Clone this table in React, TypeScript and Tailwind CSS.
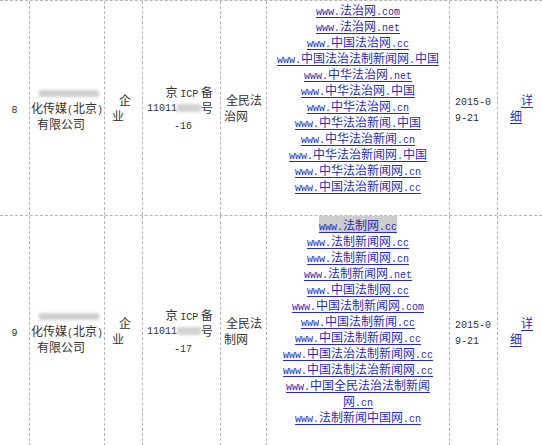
import React from 'react';

interface RecordRow {
  num: string;
  siteLine2: string;
  icpSuffix: string;
  links: string[][];
  highlightFirst?: boolean;
}

const rows: RecordRow[] = [
  {
    num: '8',
    siteLine2: '治网',
    icpSuffix: '-16',
    links: [
      ['www.法治网.com'],
      ['www.法治网.net'],
      ['www.中国法治网.cc'],
      ['www.中国法治法制新闻网.中国'],
      ['www.中华法治网.net'],
      ['www.中华法治网.中国'],
      ['www.中华法治网.cn'],
      ['www.中华法治新闻.中国'],
      ['www.中华法治新闻.cn'],
      ['www.中华法治新闻网.中国'],
      ['www.中华法治新闻网.cn'],
      ['www.中国法治新闻网.cc']
    ]
  },
  {
    num: '9',
    siteLine2: '制网',
    icpSuffix: '-17',
    highlightFirst: true,
    links: [
      ['www.法制网.cc'],
      ['www.法制新闻网.cc'],
      ['www.法制新闻网.cn'],
      ['www.法制新闻网.net'],
      ['www.中国法制网.cc'],
      ['www.中国法制新闻网.com'],
      ['www.中国法制新闻.cc'],
      ['www.中国法制新闻网.cc'],
      ['www.中国法治法制新闻网.cc'],
      ['www.中国法制法治新闻网.cc'],
      ['www.中国全民法治法制新闻', '网.cn'],
      ['www.法制新闻中国网.cn']
    ]
  }
];

// ascii runs get a half-width mono face, like the old SimSun pages
const Mixed: React.FC<{ text: string }> = ({ text }) => (
  <>
    {text
      .split(/([\x00-\x7f]+)/)
      .filter(Boolean)
      .map((s, i) =>
        /^[\x00-\x7f]+$/.test(s) ? (
          <span key={i} className="font-['Liberation_Mono',monospace] text-[10px] leading-none">
            {s}
          </span>
        ) : (
          <span key={i}>{s}</span>
        )
      )}
  </>
);

const Line: React.FC<{ className?: string; children: React.ReactNode }> = ({ className = '', children }) => (
  <div className={`h-[16px] leading-[16px] whitespace-nowrap ${className}`}>{children}</div>
);

const cell = 'border-r border-dashed border-[#b4b4b4] flex flex-col justify-center';

const TableRow: React.FC<{ row: RecordRow }> = ({ row }) => (
  <div className="grid grid-cols-[30px_75px_38px_78px_46px_183px_48px_44px] border-b border-dashed border-[#b4b4b4]">
    {/* No. */}
    <div className={`${cell} items-center`}>
      <Line>
        <Mixed text={row.num} />
      </Line>
    </div>

    {/* company, partly blurred in the source */}
    <div className={cell}>
      <Line className="pl-[9px]">
        <span className="inline-block w-[60px] h-[7px] bg-[#cfcfcf] blur-[1.5px]" />
      </Line>
      <Line className="pl-[1px]">
        <Mixed text="化传媒(北京)" />
      </Line>
      <Line className="pl-[7px]">有限公司</Line>
    </div>

    {/* type */}
    <div className={cell}>
      <Line className="pl-[14px]">企</Line>
      <Line className="pl-[7px]">业</Line>
    </div>

    {/* ICP */}
    <div className={cell}>
      <Line className="text-right pr-[7px]">
        京 <Mixed text="ICP" /> 备
      </Line>
      <Line className="flex items-center justify-end pr-[7px]">
        <span className="font-['Liberation_Mono',monospace] text-[10px] leading-none pt-[2px]">11011</span>
        <span className="w-[24px] h-[8px] bg-[#d2d2d2] blur-[1.5px]" />
        <span className="leading-none">号</span>
      </Line>
      <Line className="text-center pl-[3px]">
        <Mixed text={row.icpSuffix} />
      </Line>
    </div>

    {/* site name */}
    <div className={cell}>
      <Line className="pl-[5px]">全民法</Line>
      <Line className="pl-[3px]">{row.siteLine2}</Line>
    </div>

    {/* domains */}
    <div className="border-r border-dashed border-[#b4b4b4] pt-[1px] pb-[21px]">
      {row.links.map((parts, i) =>
        parts.map((p, j) => (
          <Line key={`${i}-${j}`} className="text-center">
            <a
              href="#"
              className={`text-[#2b2bb4] underline underline-offset-2 ${
                row.highlightFirst && i === 0 ? 'bg-[#cdcdcd]' : ''
              }`}
            >
              <Mixed text={p} />
            </a>
          </Line>
        ))
      )}
    </div>

    {/* date */}
    <div className={`${cell} pl-[5px]`}>
      <Line>
        <Mixed text="2015-0" />
      </Line>
      <Line>
        <Mixed text="9-21" />
      </Line>
    </div>

    {/* detail */}
    <div className="flex flex-col justify-center">
      <Line className="pl-[23px]">
        <a href="#" className="text-[#2b2bb4] underline underline-offset-2">详</a>
      </Line>
      <Line className="pl-[12px]">
        <a href="#" className="text-[#2b2bb4] underline underline-offset-2">细</a>
      </Line>
    </div>
  </div>
);

export default function App() {
  return (
    <div className="w-[542px] h-[445px] overflow-hidden bg-white text-[#333] text-[12px] font-['Noto_Sans_CJK_SC','Noto_Sans_CJK_JP',sans-serif]">
      <div className="border-t border-dashed border-[#b4b4b4]">
        {rows.map((r) => (
          <TableRow key={r.num} row={r} />
        ))}
      </div>
    </div>
  );
}
